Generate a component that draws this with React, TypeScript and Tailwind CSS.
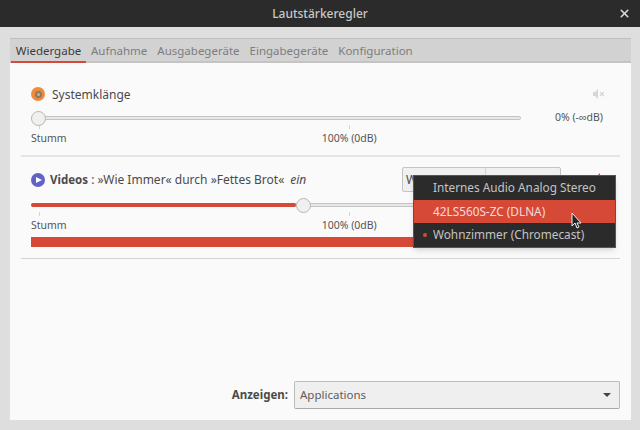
import React from "react";
import { X } from "lucide-react";

const tabs = ["Wiedergabe", "Aufnahme", "Ausgabegeräte", "Eingabegeräte", "Konfiguration"];

const font = { fontFamily: '"Noto Sans", sans-serif' };

const MuteIcon: React.FC<{ color: string }> = ({ color }) => (
  <svg width="12" height="10" viewBox="0 0 12 10" fill="none">
    <path d="M0 3h2l3-3v10L2 7H0z" fill={color} />
    <path d="M7 3l4 4M11 3L7 7" stroke={color} strokeWidth="1.2" />
  </svg>
);

const Slider: React.FC<{ value: number }> = ({ value }) => (
  <div className="relative h-[4px] w-[490px] rounded-full border border-[#c4c4c4] bg-[#e8e8e8]">
    {value > 0 && (
      <div className="absolute left-[-1px] top-[-1px] h-[4px] rounded-full bg-[#d64937]" style={{ width: value }} />
    )}
    <div
      className="absolute top-[-6px] h-[15px] w-[15px] rounded-full border border-[#b6b6b6] bg-[#f0f0ef]"
      style={{ left: value - 1 }}
    />
  </div>
);

const Scale: React.FC = () => (
  <div className="mt-[5px] w-[490px]">
    <div className="flex h-[4px] pl-[8px]">
      <div className="h-[4px] w-px bg-[#d4d4d4]" />
      <div className="ml-[309px] h-[4px] w-px bg-[#d4d4d4]" />
    </div>
    <div className="mt-[2px] flex h-[14px] items-center text-[10.5px] leading-[14px] text-[#555]">
      <span>Stumm</span>
      <span className="ml-[255px]">100% (0dB)</span>
    </div>
  </div>
);

export default function App() {
  return (
    <div className="flex h-[430px] w-[640px] flex-col overflow-hidden bg-[#dedede]" style={font}>
      <div className="relative flex h-[27px] shrink-0 items-center justify-center bg-[#2b2b2b] text-[12px] font-medium text-[#c8c8c8]">
        Lautstärkeregler
        <X className="absolute right-[9px] top-[7px] text-[#d8d8d8]" size={13} strokeWidth={3} />
      </div>

      <div className="relative flex flex-1 flex-col pb-[10px] pl-[10px] pr-[9px] pt-[11px]">
        <div className="flex h-[25px] shrink-0 items-stretch border-t border-[#c0c0c0] border-b-2 border-b-[#c4c4c4] bg-[#d2d2d2] pl-[1px] pt-[1px] text-[11.5px]">
          {tabs.map((t, i) => (
            <div
              key={t}
              className={
                i === 0
                  ? "-mb-[2px] flex w-[75px] items-center justify-center border-b-2 border-[#d64937] text-[#3c3c3c]"
                  : "flex items-center px-[5px] text-[#7d7d7d]"
              }
            >
              {t}
            </div>
          ))}
        </div>

        <div className="flex flex-1 flex-col bg-[#fafafa] px-[11px]">
          <div className="h-[94px] border-b-2 border-[#e4e4e4] pl-[10px] pt-[22px]">
            <div className="flex h-[18px] w-[574px] items-center">
              <div className="flex h-[14px] w-[14px] items-center justify-center rounded-full bg-[#ee8a3e]">
                <div className="h-[7px] w-[7px] rounded-full border-2 border-[#8a7a60] bg-[#c9b48e]" />
              </div>
              <span className="ml-[7px] mt-[1px] text-[12px] text-[#4a4a4a]">Systemklänge</span>
              <div className="ml-auto">
                <MuteIcon color="#d6d6d6" />
              </div>
            </div>
            <div className="mt-[13px] flex h-[4px] items-center">
              <Slider value={0} />
              <span className="ml-[34px] text-[10.5px] text-[#555]">0% (-∞dB)</span>
            </div>
            <Scale />
          </div>

          <div className="h-[102px] border-b border-[#d4d4d4] pl-[10px] pt-[11px]">
            <div className="relative flex h-[24px] items-center text-[12px] text-[#4a4a4a]">
              <div className="flex h-[14px] w-[14px] items-center justify-center rounded-full bg-[#5f63c4]">
                <div className="ml-[1px] h-0 w-0 border-y-[3.5px] border-l-[6px] border-y-transparent border-l-white" />
              </div>
              <span className="ml-[5px] text-[11.5px] font-bold">Videos</span>
              <span>&nbsp;: »Wie Immer« durch »Fettes Brot«</span>
              <span className="ml-[6px] italic">ein</span>
              <div className="absolute left-[371px] top-[-1px] flex h-[25px] w-[159px] items-center rounded-[2px] border border-[#c4c4c4] bg-[#f0f0f0] pl-[3px]">
                W
                <div className="absolute left-[82px] top-0 h-full w-px bg-[#d4d4d4]" />
              </div>
              <div className="absolute left-[564px] top-[5px]">
                <MuteIcon color="#d64937" />
              </div>
            </div>
            <div className="mt-[11px] flex h-[4px] items-center">
              <Slider value={265} />
            </div>
            <Scale />
            <div className="mt-[5px] h-[10px] w-[509px] bg-[#d64937]" />
          </div>

          <div className="mt-auto mb-[11px] flex h-[28px] items-center justify-end">
            <span className="mr-[6px] text-[11.5px] font-bold text-[#4a4a4a]">Anzeigen:</span>
            <div className="flex h-[28px] w-[326px] items-center justify-between rounded-[2px] border border-[#bcbcbc] border-b-[#a8a8a8] bg-[#efefef] pl-[5px] pr-[8px] text-[11.5px] text-[#5c5c5c]">
              Applications
              <div className="h-0 w-0 border-x-[4px] border-t-[4px] border-x-transparent border-t-[#444]" />
            </div>
          </div>
        </div>

        {/* device popup */}
        <div className="absolute left-[413px] top-[148px] flex w-[203px] flex-col border border-[#555] bg-[#2b2b2b] text-[11.8px] text-[#c4c4c4] shadow-md">
          <div className="flex h-[24px] items-center pl-[19px]">Internes Audio Analog Stereo</div>
          <div className="flex h-[23px] items-center bg-[#d64937] pl-[19px] text-[#f6dcd8]">42LS560S-ZC (DLNA)</div>
          <div className="relative flex h-[24px] items-center pl-[19px]">
            <div className="absolute left-[9px] top-[10px] h-[4px] w-[4px] rounded-full bg-[#d64937]" />
            Wohnzimmer (Chromecast)
          </div>
          <svg className="absolute left-[157px] top-[36px]" width="12" height="17" viewBox="0 0 12 17">
            <path d="M1 1v13l3-3 2 5 2-1-2-4h4z" fill="#222" stroke="#eee" strokeWidth="1" />
          </svg>
        </div>
      </div>
    </div>
  );
}
